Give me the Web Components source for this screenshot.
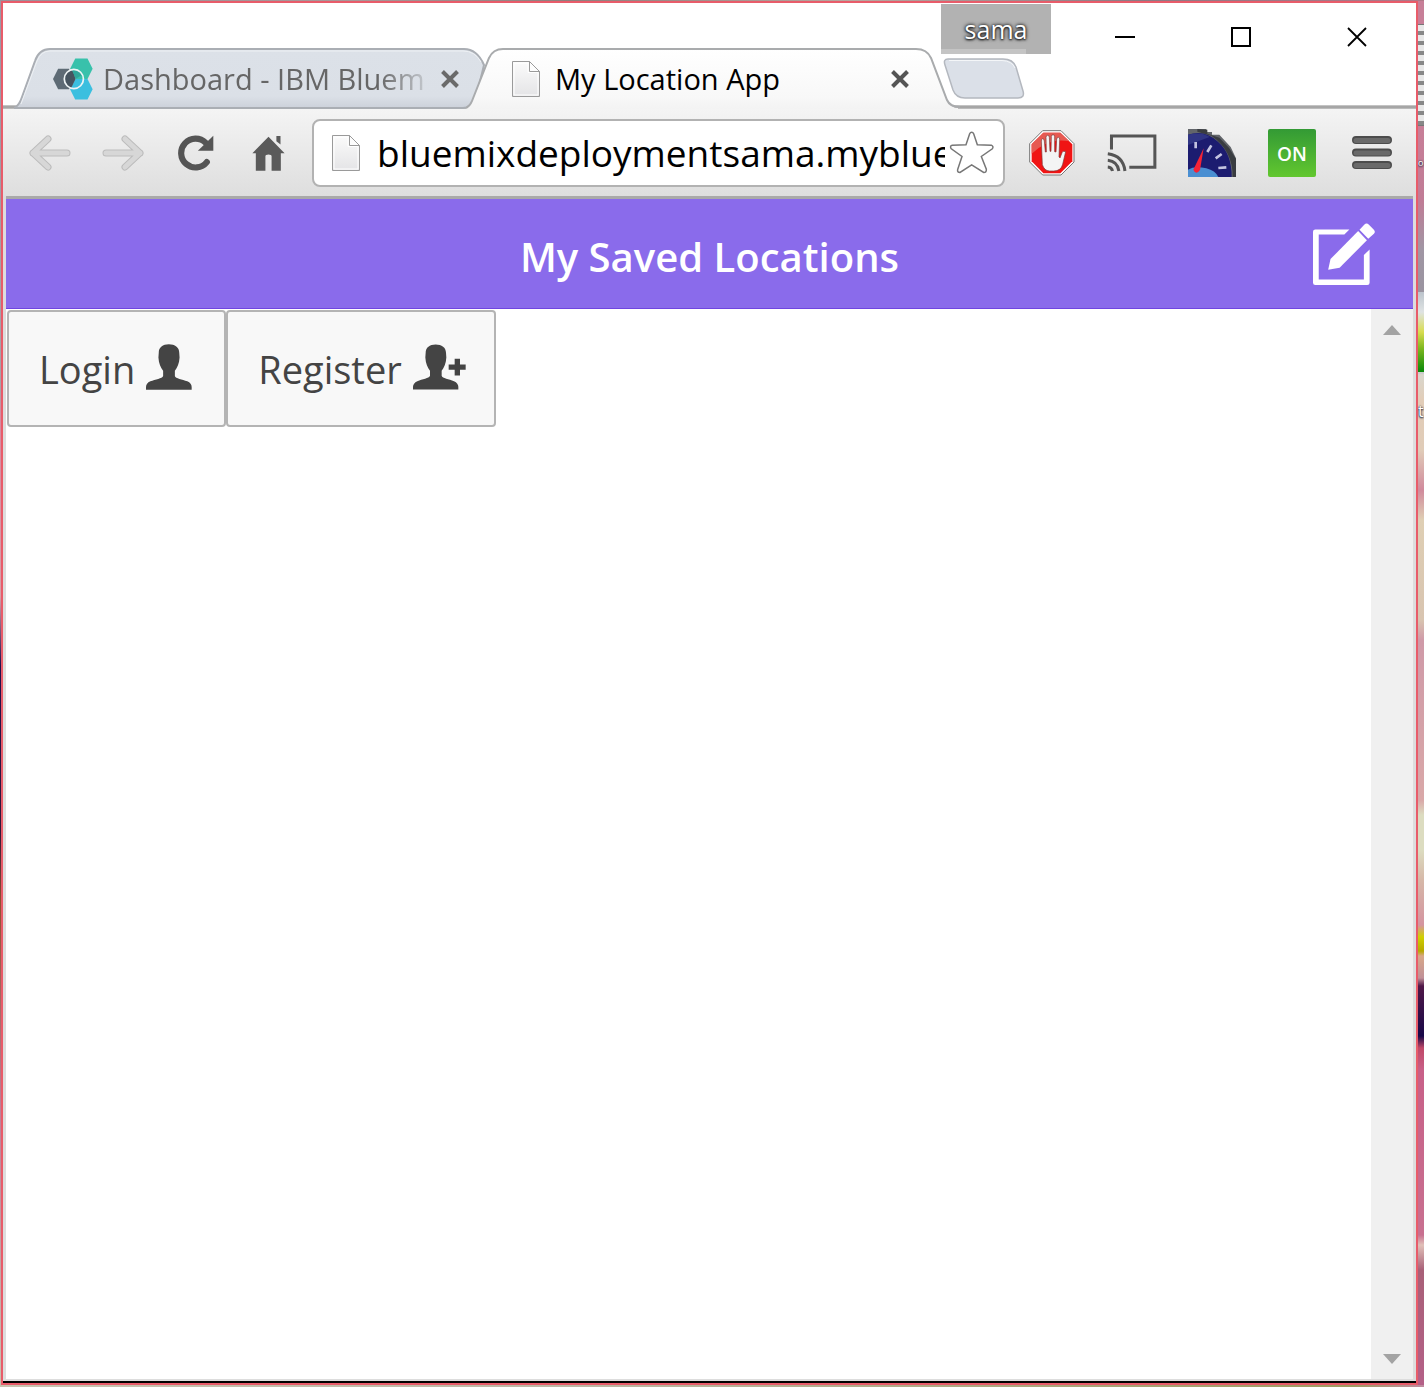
<!DOCTYPE html>
<html lang="en">
<head>
<meta charset="utf-8">
<title>My Location App</title>
<style>
html, body { margin: 0; height: 100%; }
body { font-family: "Open Sans", "Noto Sans", sans-serif; overflow: hidden; }
</style>
</head>
<body>
<desk-top>
  <browser-window>
    <tab-strip slot="top">
      <browser-tab label="Dashboard - IBM Bluem"></browser-tab>
      <browser-tab active label="My Location App"></browser-tab>
    </tab-strip>
    <tool-bar slot="top"></tool-bar>
    <app-page>
      <app-header slot="header">My Saved Locations</app-header>
      <app-button>Login</app-button>
      <app-button plus>Register</app-button>
    </app-page>
  </browser-window>
</desk-top>
<script>
const base = `:host,*{box-sizing:border-box} svg{display:block} button{border:0;padding:0;margin:0;background:none;font:inherit;color:inherit;display:flex;align-items:center;justify-content:center}`;
function define(name, render) {
  customElements.define(name, class extends HTMLElement {
    constructor() { super(); this.attachShadow({ mode: 'open' }); }
    connectedCallback() { this.shadowRoot.innerHTML = '<style>' + base + '</style>' + render(this); }
  });
}
const pageIcon = `<svg width="30" height="38" viewBox="0 0 30 38"><defs><linearGradient id="p" x2="0" y2="1"><stop stop-color="#fbfbfb"/><stop offset="1" stop-color="#e4e4e6"/></linearGradient></defs><path d="M1.5 1.5H18.5L28.500 11.500V36.500H1.500Z" fill="url(#p)" stroke="#9a9a9a"/><path d="M3 3H17V12.500H27V35H3Z" fill="none" stroke="#fff"/><path d="M18.500 1.500V11.500H28.500Z" fill="#fdfdfd" stroke="#9a9a9a"/></svg>`;

define('desk-top', () => `<style>
:host{display:flex;position:relative;overflow:hidden;height:100vh;padding:1px 6px 2px 1px;
 background:
 linear-gradient(90deg,#9a929a,#a89898 25%,#8d7f7c 40%,#b8a8a0 60%,#8b7b83 80%,#b07888) top/100% 1px no-repeat,
 linear-gradient(90deg,#c9c3b0,#bdb7a5 40%,#a09a60 95%,#c08aa0) bottom/100% 2px no-repeat,
 linear-gradient(#9c98a4,#a8a4a8 28%,#d88aa0 30%,#d9a0a8 43%,#20104a 48%,#301838 60%,#905030 65%,#c08098 80%,#c9c3b0) left/1px 100% no-repeat,
 linear-gradient(#c77f98 0,#c77f98 126px,#c07c96 200px,#a096a4 250px,#9a94a0 290px,#d9d6cc 376px,#e2cdb8 400px,#e0ccb8 450px,#d08a9c 490px,#dfcfb4 520px,#d8c4b0 620px,#cf9aa8 640px,#d9a8a8 800px,#dcdcc0 815px,#dcdcc0 850px,#d6b8a8 880px,#d494a0 925px,#d0d000 937px,#b8a800 951px,#d8a888 956px,#c09098 978px,#501848 986px,#180848 1036px,#c04868 1048px,#c86088 1070px,#c87090 1235px,#e0c0b8 1245px,#a86078 1270px,#b46088 100%) right/6px 100% no-repeat}
.deck{position:absolute;right:0;width:6px;overflow:hidden}
.stripes{top:24px;height:102px;background:repeating-linear-gradient(#e8e8e8 0 6px,#888 6px 10px);border-top:1px solid #777;border-bottom:1px solid #777}
.photo{top:292px;height:82px;background:linear-gradient(#bcc4cc,#dfe3e3 25%,#d8dc50 50%,#80b820 70%,#088808);border-bottom:2px solid #ccc}
.o{top:148px;height:30px}.t{top:396px;height:32px}
.deck span{font-size:20px;line-height:30px;color:#fff;text-shadow:0 1px 2px #102040,0 0 2px #102040}
.deck.o span{font-size:9px}
.deck.t span{font-size:16px}
</style><slot></slot>
<div class="deck stripes"></div><div class="deck o"><span>o</span></div><div class="deck photo"></div><div class="deck t"><span>t</span></div>`);

define('browser-window', () => `<style>
:host{display:flex;flex:1;min-width:0;flex-direction:column;background:#ddd;border:2px solid #e85c6a}
::slotted(app-page){flex:1}
.foot{height:2px;background:#000}
</style><slot name="top"></slot><slot></slot><div class="foot"></div>`);

define('tab-strip', () => `<style>
:host{display:grid;height:106px;background:linear-gradient(#fff 102px,#e0e0e0 102px,#a6a6a6 103px,#a6a6a6 105px,#d0d0d0)}
.tabs,.caption{grid-area:1/1;display:flex}
.tabs{align-items:flex-end;padding-left:11px}
.new{margin:0 0 9px -17px}
.caption{justify-content:flex-end;align-items:flex-start;padding-right:1px;z-index:1;pointer-events:none}
.badge{width:110px;height:50px;margin:1px 16px 0 0;background:linear-gradient(#c4c4c4,#c4c4c4) 0 100%/85px 5px no-repeat #b2b2b2;color:#fff;font-size:25px;line-height:50px;text-shadow:0 1px 2px #222,0 0 3px #222,0 0 4px #333}
.win{width:116px;height:68px}
button{pointer-events:auto}
</style>
<div class="tabs"><slot></slot><button class="new" aria-label="New tab"><svg width="82" height="42" viewBox="0 0 82 42"><path d="M5 1H60Q70 1 73 9L80 33Q82 40 75 40H22Q13 40 10 32L2 7Q0 1 5 1Z" fill="#dbe0e8" stroke="#b4b8bf" stroke-width="1.500"/><path d="M6 2.500H59Q69 3 72 10" fill="none" stroke="#f4f6f8"/></svg></button></div>
<div class="caption"><button class="badge">sama</button>
<button class="win" aria-label="Minimize"><svg width="20" height="20"><path d="M0 10H20" stroke="#000" stroke-width="2"/></svg></button>
<button class="win" aria-label="Maximize"><svg width="20" height="20"><path d="M1 1H19V19H1Z" fill="none" stroke="#000" stroke-width="2"/></svg></button>
<button class="win" aria-label="Close"><svg width="20" height="20"><path d="M1 1L19 19M19 1L1 19" stroke="#000" stroke-width="1.800"/></svg></button></div>`);

define('browser-tab', el => {
  const on = el.hasAttribute('active');
  const w = on ? 494 : 474;
  const shape = on
    ? `<path d="M0 60Q4 58 6 53L23 10Q27 1 37 1H450Q461 1 465 10L481 52Q484 59 492 60V61H0Z" fill="url(#g)"/><path d="M0 60Q4 58 6 53L23 10Q27 1 37 1H450Q461 1 465 10L481 52Q484 59 494 59" fill="none" stroke="#a9abad" stroke-width="2"/>`
    : `<path d="M0 60Q5 58 8 49L21 13Q25 1 36 1H450Q463 1 470 17L462 50Q458 60 449 60Z" fill="url(#g)" stroke="#aaaeb4" stroke-width="2"/><path d="M7 56L23 13Q27 3 36 3H449Q461 3 467 14" fill="none" stroke="#eef1f4"/>`;
  return `<style>
:host{display:grid;width:${w}px;height:61px;flex:none;${on ? 'margin-left:-22px;z-index:1' : ''}}
svg.shape,.row{grid-area:1/1}
.row{display:flex;align-items:center;z-index:1;padding:${on ? '0 50px 0 45px' : '0 51px 0 39px'}}
.label{flex:1;min-width:0;overflow:hidden;white-space:nowrap;font-size:29px;line-height:40px;margin:0 ${on ? 20 : 16}px 0 ${on ? 14 : 10}px;color:${on ? '#000' : '#666'};${on ? '' : '-webkit-mask-image:linear-gradient(90deg,#000 86%,transparent 104%);mask-image:linear-gradient(90deg,#000 86%,transparent 104%)'}}
</style>
<svg class="shape" width="${w}" height="61" viewBox="0 0 ${w} 61"><defs><linearGradient id="g" x2="0" y2="1"><stop stop-color="${on ? '#fff' : '#dce1e8'}"/><stop offset=".8" stop-color="${on ? '#f8f8f8' : '#dbe0e7'}"/><stop offset="1" stop-color="${on ? '#f3f3f3' : '#ccd1da'}"/></linearGradient></defs>${shape}</svg>
<div class="row">${on ? pageIcon : `<svg width="40" height="42" viewBox="159 176 117 122"><path d="M174 207H206L220 237L206 267H174L159 237Z" fill="#5e6b75"/><path d="M224 177H260L275 207L260 237L246 237L225 237L209 207Z" fill="#38c1ab"/><path d="M225 237H260L275 267L260 297H224L209 267Z" fill="#3bbfdf"/><path d="M195 222Q203 209 216 211L225 237L213 262Q199 262 194 246Z" fill="#46545f"/><path d="M214 211L226 236L244 225Q236 210 220 209Z" fill="#2fa69a"/><circle cx="220" cy="237" r="28" fill="none" stroke="#eef4f5" stroke-width="5"/></svg>`}
<div class="label">${el.getAttribute('label')}</div>
<button aria-label="Close tab"><svg width="20" height="20"><path d="M2.500 2.500L17.500 17.500M17.500 2.500L2.500 17.500" stroke="${on ? '#555' : '#6a6a6a'}" stroke-width="4"/></svg></button></div>`;
});

define('tool-bar', () => `<style>
:host{display:flex;height:87px;padding:10px 4px 9px 10px;background:linear-gradient(#f4f4f4,#dedede)}
.nav{width:73px}.ext{width:80px}
.omni{flex:1;min-width:0;display:flex;align-items:center;margin:0 7px;border:2px solid #b2b2b2;border-radius:8px;background:#fff;padding:0 8px 0 17px}
input{flex:1;min-width:0;border:0;outline:0;padding:0;margin:0 4px 0 16px;background:none;font:inherit;font-size:37px;line-height:60px;height:60px;color:#000}
.on{width:48px;height:48px;border-radius:2px;background:linear-gradient(#339a35,#62c72f);color:#fff;font-size:19px;font-weight:600;line-height:51px;text-align:center}
</style>
<button class="nav" aria-label="Back"><svg width="42" height="38" viewBox="0 0 42 38"><path d="M19 5L4 19L19 33M4 19H38" fill="none" stroke="#bcbcbc" stroke-width="7" stroke-linecap="round" stroke-linejoin="round"/><path d="M19 5L4 19L19 33M4 19H38" fill="none" stroke="#d7d7d7" stroke-width="5" stroke-linecap="round" stroke-linejoin="round"/></svg></button>
<button class="nav" aria-label="Forward"><svg width="42" height="38" viewBox="0 0 42 38"><path d="M23 5L38 19L23 33M38 19H4" fill="none" stroke="#bcbcbc" stroke-width="7" stroke-linecap="round" stroke-linejoin="round"/><path d="M23 5L38 19L23 33M38 19H4" fill="none" stroke="#d7d7d7" stroke-width="5" stroke-linecap="round" stroke-linejoin="round"/></svg></button>
<button class="nav" aria-label="Reload"><svg width="36" height="36" viewBox="534 407 105 105"><path d="M618 486A42 42 0 1 1 615 430" fill="none" stroke="#555" stroke-width="18" stroke-linecap="round"/><path d="M637 409V453H592Z" fill="#555"/></svg></button>
<button class="nav" aria-label="Home"><svg width="33" height="36" viewBox="757 406 96 105"><path d="M805 411L852 459H841V510H814V468Q814 463 805 463Q796 463 796 468V510H768V459H758Z" fill="#5a5a5a"/><path d="M828 409H840V434L828 424Z" fill="#5a5a5a"/></svg></button>
<div class="omni">${pageIcon}<input aria-label="Address" value="bluemixdeploymentsama.myblue"><button aria-label="Bookmark"><svg width="46" height="46" viewBox="60 390 138 135"><path d="M128 395Q132 395 134 400L145 433L187 434Q195 438 190 445L157 468L172 506Q173 516 164 516L128 493L93 516Q84 516 86 507L99 468L66 444Q62 436 70 434L111 433L122 400Q124 395 128 395Z" fill="#fff" stroke="#777" stroke-width="4.500"/></svg></button></div>
<button class="ext" aria-label="Ad blocker"><svg width="46" height="46" viewBox="299 389 138 138"><path d="M340 391H395L434 430V485L395 524H340L301 485V430Z" fill="#fff" stroke="#777" stroke-width="3"/><path d="M342 397H393L429 432V483L393 519H342L307 483V432Z" fill="#f01414"/><path d="M342 397H393L420 423Q360 410 307 460V432Z" fill="#e65a52"/><path d="M336 422Q336 415 340 415Q344 415 345 422L348 455L351 455L350 411Q350 405 355 405Q360 405 360 411L362 453H365L366 408Q367 403 371 403Q376 403 376 409L376 454L380 455L382 416Q383 411 387 411Q392 411 391 418L389 469L392 473L398 457Q401 450 409 454L400 492Q395 512 373 512H360Q345 511 339 493Z" fill="#f4f4f4" stroke="#7d3838" stroke-width="2"/></svg></button>
<button class="ext" aria-label="Cast"><svg width="50" height="38" viewBox="534 403 148 113"><path d="M547 449V409H676V502H600" fill="none" stroke="#555" stroke-width="9"/><path d="M536 462Q582 468 587 513M536 481Q565 484 569 513M536 501Q548 502 550 513" fill="none" stroke="#555" stroke-width="9"/></svg></button>
<button class="ext" aria-label="Speed"><svg width="48" height="48" viewBox="0 0 144 144"><path d="M0 0H55V9H72V17H94L128 54L144 88V144H0Z" fill="#62656a"/><path d="M58 2V14L94 26L124 58L144 90V144H134Q135 65 70 20L28 8V0Z" fill="#393c40"/><path d="M0 17Q50 0 90 38Q132 75 131 144H0Z" fill="#1c1c70"/><path d="M0 122Q20 110 55 118Q82 125 91 144H0Z" fill="#4a8fd2"/><path d="M0 17Q40 8 65 24L0 48Z" fill="#303584"/><path d="M23 39V58M70 49L58 69M101 75L83 88M115 115L91 117" stroke="#c3c3e0" stroke-width="8"/><path d="M47 58L36 123Q24 140 16 122Z" fill="#f52335"/></svg></button>
<button class="ext" aria-label="Extension is on"><span class="on">ON</span></button>
<button class="ext" aria-label="Menu"><svg width="40" height="36"><path d="M4 5H36M4 17.500H36M4 30H36" stroke="#4c4c4c" stroke-width="8" stroke-linecap="round"/><path d="M4 5.500H36M4 18H36M4 30.500H36" stroke="#6a6a6a" stroke-width="5" stroke-linecap="round"/></svg></button>`);

define('app-page', () => `<style>
:host{display:flex;flex-direction:column;min-height:0;margin:0 3px 2px;border-top:3px solid #a9a9a9;background:#fff}
.body{flex:1;display:flex;min-height:0}
.main{flex:1;display:flex;align-items:flex-start;padding:1px}
.bar{width:42px;background:#f0f0f0;display:flex;flex-direction:column;justify-content:space-between}
.bar button{height:41px}
</style><slot name="header"></slot><div class="body"><div class="main"><slot></slot></div>
<div class="bar"><button aria-label="Scroll up"><svg width="18" height="10"><path d="M0 10L9 0L18 10Z" fill="#a3a3a3"/></svg></button><button aria-label="Scroll down"><svg width="18" height="10"><path d="M0 0H18L9 10Z" fill="#a3a3a3"/></svg></button></div></div>`);

define('app-header', () => `<style>
:host{display:grid;grid-template-columns:1fr auto 1fr;align-items:center;height:110px;padding:0 38px;background:#8a6beb;border-bottom:1px solid #6f45e0;color:#fff}
h1{grid-column:2;margin:0;font-size:40px;line-height:56px;font-weight:600;padding-top:6px}
button{justify-self:end}
</style><h1><slot></slot></h1><button aria-label="Edit"><svg width="62" height="62" viewBox="147 98 184 184"><path d="M255 117H154Q147 117 147 124V275Q147 282 154 282H308Q315 282 315 275V177L298 193V266H164V132H240Z" fill="#fff"/><path d="M281 122L307 149L226 231L192 237L199 205Z" fill="#fff"/><path d="M285 118L299 103Q306 96 313 103L327 117Q334 124 327 131L311 145Z" fill="#fff"/></svg></button>`);

define('app-button', el => {
  const plus = el.hasAttribute('plus');
  return `<style>
:host{display:block}
button{gap:11px;height:117px;padding:0 ${plus ? 28 : 32}px 3px 30px;border:2px solid #b4b4b4;border-radius:4px;background:#f8f8f8;color:#444;font-size:38px;line-height:52px}
span{padding-top:4px}
</style><button><span><slot></slot></span><svg width="${plus ? 53 : 46}" height="46" viewBox="442 162 ${plus ? 159 : 137} 137"><path d="M510 163C528 163 541 172 541 188L542 202C541 220 535 232 528 242V257C530 265 550 267 565 273Q578 279 578 290V298H442V290Q442 279 455 273C470 267 490 265 493 257V242C486 232 480 220 479 202L480 188C480 172 492 163 510 163Z" fill="#444"/>${plus ? '<path d="M567 206H583V223H600V239H583V256H567V239H549V223H567Z" fill="#444"/>' : ''}</svg></button>`;
});
</script>
</body>
</html>
